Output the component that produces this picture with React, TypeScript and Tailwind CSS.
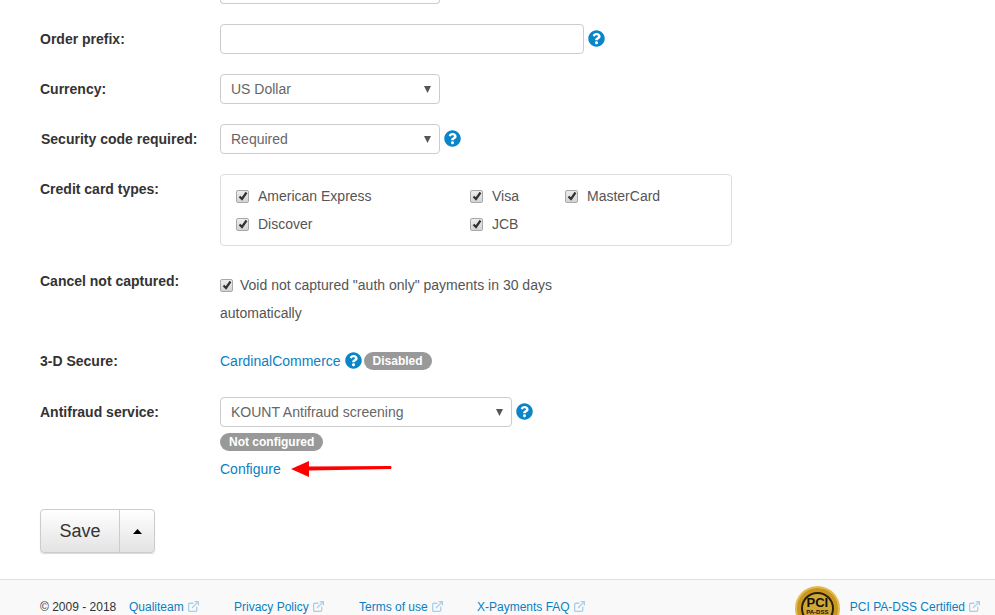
import React from 'react';
import { FaQuestionCircle } from 'react-icons/fa';
import { ExternalLink } from 'lucide-react';

const Help = () => <FaQuestionCircle size={17} className="text-[#0a85c7] shrink-0 -translate-y-px" />;

const Check = () => (
  <span className="w-[13px] h-[13px] shrink-0 rounded-[2px] border border-[#a8a8a8] bg-gradient-to-b from-[#ededed] to-[#d4d4d4] flex items-center justify-center">
    <svg width="10" height="10" viewBox="0 0 10 10">
      <path d="M1.5 5.5 L4 8 L8.5 1.5" fill="none" stroke="#333" strokeWidth="2.2" />
    </svg>
  </span>
);

const Select = ({ value, width }: { value: string; width: string }) => (
  <div className={`relative h-[30px] ${width} border border-[#ccc] rounded bg-white flex items-center pl-[10px] text-[#666]`}>
    {value}
    <svg className="absolute right-[8px] top-[11px]" width="7" height="7" viewBox="0 0 8 8">
      <path d="M0 0 H8 L4 8 Z" fill="#555" />
    </svg>
  </div>
);

const Row = ({ label, className = '', labelClass = '', children }: { label: string; className?: string; labelClass?: string; children: React.ReactNode }) => (
  <div className={`flex ${className}`}>
    <label className={`w-[180px] shrink-0 pt-[5px] font-bold leading-5 text-[#333] ${labelClass}`}>{label}</label>
    <div className="flex-1">{children}</div>
  </div>
);

const FooterLink = ({ children, className = '' }: { children: React.ReactNode; className?: string }) => (
  <a className={`flex items-center gap-[4px] text-[#0a7fc2] ${className}`}>
    {children}
    <ExternalLink size={13} strokeWidth={2.4} className="text-[#a9cfe8] -translate-y-px -translate-x-px" />
  </a>
);

const Card = ({ label }: { label: string }) => (
  <div className="flex items-center gap-[9px]">
    <Check />
    <span>{label}</span>
  </div>
);

export default function App() {
  return (
    <div className="h-[615px] w-[995px] overflow-hidden bg-white text-[14px] text-[#555] flex flex-col" style={{ fontFamily: '"Liberation Sans", Arial, sans-serif' }}>
      <div className="ml-[220px] w-[220px] h-[4px] border border-t-0 border-[#ccc] rounded-b" />

      <div className="px-[40px] pt-[20px] flex flex-col h-[575px]">
        <div className="flex flex-col gap-[20px]">
          <Row label="Order prefix:">
            <div className="flex items-center gap-[4px]">
              <input className="h-[30px] w-[364px] border border-[#ccc] rounded bg-white" />
              <Help />
            </div>
          </Row>
          <Row label="Currency:">
            <Select value="US Dollar" width="w-[220px]" />
          </Row>
          <Row label="Security code required:" labelClass="pl-px">
            <div className="flex items-center gap-[4px]">
              <Select value="Required" width="w-[220px]" />
              <Help />
            </div>
          </Row>
          <Row label="Credit card types:">
            <div className="w-[512px] h-[72px] border border-[#ddd] rounded px-[15px] pt-[7px] grid grid-cols-[234px_95px_1fr] auto-rows-[28px] items-center">
              <Card label="American Express" />
              <Card label="Visa" />
              <Card label="MasterCard" />
              <Card label="Discover" />
              <Card label="JCB" />
            </div>
          </Row>
        </div>

        <Row label="Cancel not captured:" className="mt-[20px]">
          <div className="w-[340px] leading-[28px] pt-[5px]">
            <div className="flex items-center gap-[7px]">
              <Check />
              <span className="whitespace-nowrap">Void not captured "auth only" payments in 30 days</span>
            </div>
            <div>automatically</div>
          </div>
        </Row>

        <Row label="3-D Secure:" className="mt-[19px]">
          <div className="flex items-center h-[30px]">
            <a className="text-[#0a7fc2] mr-[4px]">CardinalCommerce</a>
            <Help />
            <span className="ml-[2px] h-[18px] px-[9px] rounded-full bg-[#999] text-white text-[12px] font-bold flex items-center">Disabled</span>
          </div>
        </Row>

        <Row label="Antifraud service:" className="mt-[21px]">
          <div className="flex items-center gap-[4px]">
            <Select value="KOUNT Antifraud screening" width="w-[292px]" />
            <Help />
          </div>
          <span className="mt-[6px] h-[18px] w-fit px-[9px] rounded-full bg-[#999] text-white text-[12px] font-bold flex items-center">Not configured</span>
          <div className="mt-[8px] h-[20px] flex items-center">
            <a className="text-[#0a7fc2]">Configure</a>
            <svg className="ml-[10px]" width="101" height="16" viewBox="0 0 101 16">
              <path d="M0 8 L18 0 L18 5.5 L100 5 Q101 6.5 100 8 L18 9.5 L18 16 Z" fill="#f00" />
            </svg>
          </div>
        </Row>

        <div className="mt-[30px] flex w-[115px] h-[44px] rounded border border-[#ccc] bg-gradient-to-b from-white to-[#e3e3e3] shadow-[0_1px_1px_rgba(0,0,0,0.15)]">
          <button className="w-[79px] text-[18px] text-[#333] border-r border-[#ccc]">Save</button>
          <button className="flex-1 flex items-center justify-center">
            <svg width="9" height="5" viewBox="0 0 9 5">
              <path d="M0 5 L4.5 0 L9 5 Z" fill="#000" />
            </svg>
          </button>
        </div>
      </div>

      <footer className="mt-auto relative h-[36px] border-t border-[#ddd] bg-[#f9f9f9] text-[12px] flex items-start pl-[40px] pt-[20px] leading-[15px]">
        <span className="text-[#333] w-[89px]">© 2009 - 2018</span>
        <FooterLink className="w-[105px]">Qualiteam</FooterLink>
        <FooterLink className="w-[125px]">Privacy Policy</FooterLink>
        <FooterLink className="w-[118px]">Terms of use</FooterLink>
        <FooterLink>X-Payments FAQ</FooterLink>
        <div className="ml-auto mr-[13px] flex items-start">
          <div className="mt-[-14px] w-[45px] h-[45px] rounded-full bg-[#c9971f] border-[2px] border-[#e2bb52] flex items-center justify-center mr-[10px] shrink-0">
            <div className="w-[33px] h-[33px] rounded-full bg-[#d2a835] border-[2px] border-[#2a200a] text-[#111] flex flex-col items-center pt-[3px]">
              <span className="text-[13px] font-bold leading-[12px]">PCI</span>
              <span className="text-[6px] font-bold leading-[7px]">PA-DSS</span>
            </div>
          </div>
          <FooterLink>PCI PA-DSS Certified</FooterLink>
        </div>
      </footer>
    </div>
  );
}
